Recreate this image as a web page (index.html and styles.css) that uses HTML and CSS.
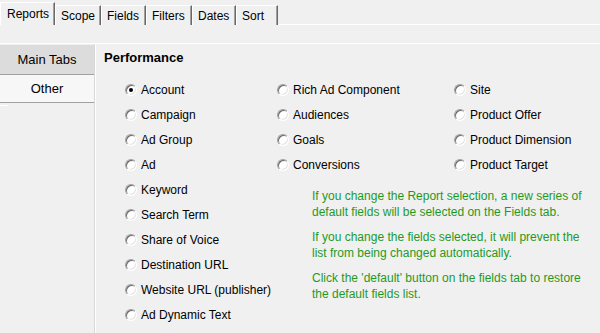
FILE: index.html
```html
<!DOCTYPE html>
<html lang="en">
<head>
    <meta charset="UTF-8">
    <title>Report Options</title>
    <link rel="stylesheet" href="styles.css">
</head>
<body>
    <div class="tabstrip">
        <div class="tab active tab-reports">Reports</div>
        <div class="tab tab-scope">Scope</div>
        <div class="tab tab-fields">Fields</div>
        <div class="tab tab-filters">Filters</div>
        <div class="tab tab-dates">Dates</div>
        <div class="tab tab-sort">Sort</div>
    </div>

    <div class="panel">
        <div class="side">
            <div class="side-btn current">Main Tabs</div>
            <div class="side-btn">Other</div>
            <div class="side-mark"></div>
        </div>

        <div class="content">
            <h2 class="heading">Performance</h2>
            <div class="options">
                <div class="col-first">
                    <label class="radio"><span class="dot checked"></span>Account</label>
                    <label class="radio"><span class="dot"></span>Campaign</label>
                    <label class="radio"><span class="dot"></span>Ad Group</label>
                    <label class="radio"><span class="dot"></span>Ad</label>
                    <label class="radio"><span class="dot"></span>Keyword</label>
                    <label class="radio"><span class="dot"></span>Search Term</label>
                    <label class="radio"><span class="dot"></span>Share of Voice</label>
                    <label class="radio"><span class="dot"></span>Destination URL</label>
                    <label class="radio"><span class="dot"></span>Website URL (publisher)</label>
                    <label class="radio"><span class="dot"></span>Ad Dynamic Text</label>
                </div>
                <div class="col-rest">
                    <div class="grid">
                        <label class="radio"><span class="dot"></span>Rich Ad Component</label>
                        <label class="radio"><span class="dot"></span>Site</label>
                        <label class="radio"><span class="dot"></span>Audiences</label>
                        <label class="radio"><span class="dot"></span>Product Offer</label>
                        <label class="radio"><span class="dot"></span>Goals</label>
                        <label class="radio"><span class="dot"></span>Product Dimension</label>
                        <label class="radio"><span class="dot"></span>Conversions</label>
                        <label class="radio"><span class="dot"></span>Product Target</label>
                    </div>
                    <div class="notes">
                        <p>If you change the Report selection, a new series of<br>default fields will be selected on the Fields tab.</p>
                        <p>If you change the fields selected, it will prevent the<br>list from being changed automatically.</p>
                        <p>Click the 'default' button on the fields tab to restore<br>the default fields list.</p>
                    </div>
                </div>
            </div>
        </div>
    </div>
</body>
</html>
```

FILE: styles.css
```css
* {
    margin: 0;
    padding: 0;
    box-sizing: border-box;
}

body {
    font-family: 'Liberation Sans', Arial, sans-serif;
    font-size: 12px;
    color: #000;
    background: #f0f0f0;
    width: 600px;
    height: 333px;
    overflow: hidden;
}

/* top tabs */
.tabstrip {
    display: flex;
    align-items: flex-end;
    height: 25px;
    border-bottom: 1px solid #fff;
}

.tab {
    height: 20px;
    padding: 2px 0 0 5px;
    margin-bottom: -1px;
    border-left: 1px solid #fff;
    border-top: 1px solid #fff;
    border-right: 1px solid #696969;
    box-shadow: inset -1px 0 0 #a0a0a0;
    line-height: 16px;
    white-space: nowrap;
    overflow: hidden;
    background: #f0f0f0;
}

.tab.active {
    height: 23px;
    padding: 3px 0 0 6px;
    position: relative;
    z-index: 1;
}

.tab-reports { width: 55px; }
.tab-scope { width: 46px; }
.tab-fields { width: 45px; }
.tab-filters { width: 46px; }
.tab-dates { width: 44px; }
.tab-sort { width: 42px; }

/* panel */
.panel {
    display: flex;
    margin-top: 18px;
    border-top: 1px solid #fff;
    height: 290px;
}

.side {
    width: 96px;
    border-right: 1px solid #fff;
    box-shadow: inset -1px 0 0 #d8d8d8;
    padding-top: 1px;
}

.side-btn {
    height: 30px;
    margin-right: 1px;
    line-height: 29px;
    text-align: center;
    font-size: 13px;
    border-bottom: 1px solid #a0a0a0;
    background: #f7f7f7;
}

.side-btn.current {
    background: #dcdcdc;
}

.side-btn + .side-btn {
    height: 28px;
    line-height: 28px;
}

.side-mark {
    width: 8px;
    height: 1px;
    margin-top: 2px;
    background: #fff;
}

.content {
    flex: 1;
    padding: 6px 0 0 8px;
}

.heading {
    font-size: 13px;
    font-weight: bold;
    line-height: 16px;
    margin-bottom: 11px;
}

.options {
    display: flex;
    padding-left: 21px;
}

.col-first {
    width: 152px;
}

.grid {
    display: grid;
    grid-template-columns: 177px auto;
}

.radio {
    display: flex;
    align-items: center;
    height: 25px;
    white-space: nowrap;
    font-size: 12px;
}

.dot {
    position: relative;
    width: 12px;
    height: 12px;
    margin-right: 4px;
    border-radius: 50%;
    border: 1px solid;
    border-color: #a0a0a0 #fff #fff #a0a0a0;
    box-shadow: inset 1px 1px 0 #696969, inset -1px -1px 0 #e3e3e3;
    background: #fff;
}

.dot.checked::after {
    content: "";
    position: absolute;
    left: 3px;
    top: 3px;
    width: 4px;
    height: 4px;
    border-radius: 50%;
    background: #000;
}

.notes {
    margin: 11px 0 0 35px;
    color: #1f9a1f;
    line-height: 16px;
    white-space: nowrap;
}

.notes p {
    margin-bottom: 9px;
}
```
